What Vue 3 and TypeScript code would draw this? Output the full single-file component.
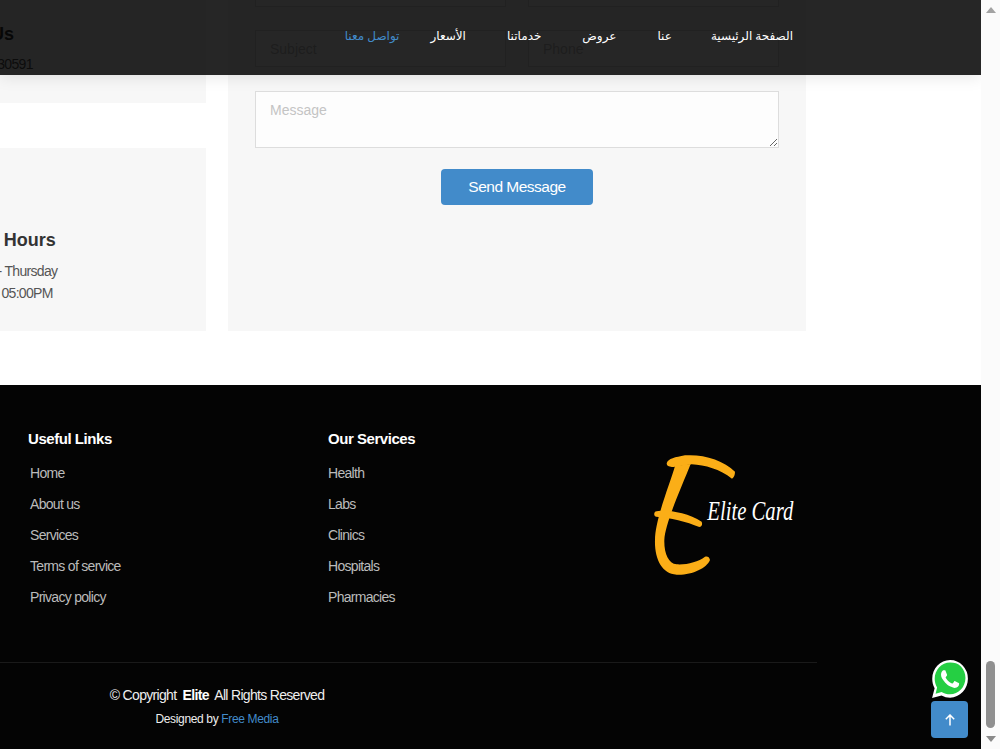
<script setup lang="ts">
const navItems = ['الصفحة الرئيسية', 'عنا', 'عروض', 'خدماتنا', 'الأسعار'];
const usefulLinks = ['Home', 'About us', 'Services', 'Terms of service', 'Privacy policy'];
const serviceLinks = ['Health', 'Labs', 'Clinics', 'Hospitals', 'Pharmacies'];
</script>

<template>
  <div class="page">
    <div class="viewport">
      <header class="topbar">
        <nav class="nav">
          <a v-for="item in navItems" :key="item" class="nav-link">{{ item }}</a>
          <a class="nav-link active">تواصل معنا</a>
        </nav>
      </header>

      <section class="contact">
        <div class="info-col">
          <div class="info-card call">
            <h3>Call Us</h3>
            <p>+1 5589 30591</p>
          </div>
          <div class="info-card hours">
            <h3>Working Hours</h3>
            <p>Saturday - Thursday</p>
            <p>09:00AM - 05:00PM</p>
          </div>
        </div>

        <form class="contact-form" @submit.prevent>
          <div class="form-row">
            <input type="text" placeholder="Your Name" />
            <input type="text" placeholder="Your Email" />
          </div>
          <div class="form-row">
            <input type="text" placeholder="Subject" />
            <input type="text" placeholder="Phone" />
          </div>
          <textarea placeholder="Message"></textarea>
          <button type="submit" class="send-btn">Send Message</button>
        </form>
      </section>

      <footer class="footer">
        <div class="footer-top">
          <div class="footer-col">
            <h4>Useful Links</h4>
            <ul class="indented">
              <li v-for="link in usefulLinks" :key="link">{{ link }}</li>
            </ul>
          </div>
          <div class="footer-col">
            <h4>Our Services</h4>
            <ul>
              <li v-for="link in serviceLinks" :key="link">{{ link }}</li>
            </ul>
          </div>
          <svg class="logo" width="150" height="130" viewBox="90 60 450 390">
            <g fill="#fbae17">
              <path d="M140 100C145 85 165 82 195 76C250 72 310 90 345 125C345 135 342 142 336 146C300 118 255 105 215 103L165 110C150 112 140 110 140 100Z" />
              <path d="M165 108C150 160 105 270 105 330C103 385 125 432 170 434C215 436 260 415 270 390C268 380 262 378 255 380C235 395 200 405 170 403C145 400 132 370 133 330C135 280 185 170 212 102Z" />
              <path d="M105 245C130 238 200 245 245 275C248 282 246 290 238 291C200 275 150 262 108 260C102 258 101 250 105 245Z" />
            </g>
            <text x="262" y="270" class="logo-text" textLength="258" lengthAdjust="spacingAndGlyphs">Elite Card</text>
          </svg>
        </div>

        <div class="footer-bottom">
          <p class="copyright">© Copyright <strong>Elite</strong> All Rights Reserved</p>
          <p class="credits">Designed by <a>Free Media</a></p>
        </div>
      </footer>

      <a class="whatsapp">
        <svg width="36" height="38" viewBox="0 0 24 24" preserveAspectRatio="none">
          <path fill="#fff" d="M12.05 0C5.495 0 .16 5.335.157 11.892c0 2.096.547 4.142 1.588 5.945L.057 24l6.305-1.654a11.882 11.882 0 005.683 1.448h.005c6.554 0 11.89-5.335 11.893-11.893a11.821 11.821 0 00-3.48-8.413A11.821 11.821 0 0012.05 0z" />
          <path fill="#25cf43" d="M12.05 1.6C6.4 1.6 1.8 6.2 1.8 11.9c0 2 .55 3.8 1.6 5.5l-1 3.9 4-1.05c1.7.95 3.6 1.45 5.6 1.45 5.65 0 10.3-4.6 10.3-10.3 0-2.75-1.05-5.35-3-7.3-1.95-1.9-4.5-2.5-7.25-2.5z" />
          <path fill="#fff" d="M17.472 14.382c-.297-.149-1.758-.867-2.03-.967-.273-.099-.471-.148-.67.15-.197.297-.767.966-.94 1.164-.173.199-.347.223-.644.075-.297-.15-1.255-.463-2.39-1.475-.883-.788-1.48-1.761-1.653-2.059-.173-.297-.018-.458.13-.606.134-.133.298-.347.446-.52.149-.174.198-.298.298-.497.099-.198.05-.371-.025-.52-.075-.149-.669-1.612-.916-2.207-.242-.579-.487-.5-.669-.51-.173-.008-.371-.01-.57-.01-.198 0-.52.074-.792.372-.272.297-1.04 1.016-1.04 2.479 0 1.462 1.065 2.875 1.213 3.074.149.198 2.096 3.2 5.077 4.487.709.306 1.262.489 1.694.625.712.227 1.36.195 1.871.118.571-.085 1.758-.719 2.006-1.413.248-.694.248-1.289.173-1.413-.074-.124-.272-.198-.57-.347z" />
        </svg>
      </a>
      <a class="back-top">
        <svg width="12" height="12" viewBox="0 0 12 12" fill="none" stroke="#fff" stroke-width="1.5">
          <path d="M6 11.5V1M1.8 5.2L6 1l4.2 4.2" />
        </svg>
      </a>
    </div>

    <div class="scrollbar">
      <span class="arrow up"></span>
      <div class="track"><div class="thumb"></div></div>
      <span class="arrow down"></span>
    </div>
  </div>
</template>

<style>
html,
body {
  margin: 0;
  overflow: hidden;
  background: #fff;
}
</style>

<style scoped>
.page {
  display: flex;
  width: 1000px;
  height: 749px;
  overflow: hidden;
  font-family: "Liberation Sans", Arial, sans-serif;
}

.viewport {
  position: relative;
  width: 981px;
  height: 749px;
  overflow: hidden;
  background: #fff;
}

.topbar {
  position: absolute;
  top: 0;
  left: 0;
  right: 0;
  z-index: 5;
  height: 75px;
  background: rgba(0, 0, 0, 0.85);
  box-shadow: 0 2px 15px rgba(0, 0, 0, 0.1);
}

.nav {
  direction: rtl;
  display: flex;
  gap: 41px;
  height: 71px;
  align-items: center;
  padding-right: 188px;
  font-family: "Noto Sans", "DejaVu Sans", sans-serif;
  font-size: 12px;
}

.nav-link {
  color: #fff;
}

.nav-link:first-child {
  margin-left: -2px;
}

.nav-link.active {
  color: #428bca;
  margin-right: -10px;
}

.contact {
  display: flex;
  gap: 22px;
  margin-top: -100px;
  padding-bottom: 54px;
}

.info-col {
  flex: none;
  display: flex;
  flex-direction: column;
  gap: 45px;
  width: 406px;
  margin-left: -200px;
}

.info-card {
  display: flex;
  flex-direction: column;
  justify-content: flex-end;
  box-sizing: border-box;
  background: #f7f7f7;
}

.info-card h3 {
  margin: 0 0 8px;
  font-size: 18px;
  line-height: 24px;
  color: #333;
}

.info-card p {
  margin: 0;
  font-size: 14px;
  line-height: 22px;
  color: #555;
  letter-spacing: -0.7px;
}

.info-card.call {
  height: 203px;
  padding: 0 0 28px 153px;
}

.info-card.call h3 {
  margin-bottom: 7px;
}

.info-card.call p {
  margin-left: -5px;
}

.info-card.hours {
  height: 183px;
  padding: 0 0 27px 127px;
}

.info-card.hours p {
  margin-left: 13px;
}

.info-card.hours h3 + p {
  margin-left: 17px;
}

.contact-form {
  box-sizing: border-box;
  width: 578px;
  height: 431px;
  padding: 70px 27px 0;
  background: #f7f7f7;
  display: flex;
  flex-direction: column;
  align-items: center;
}

.form-row {
  display: flex;
  gap: 22px;
  width: 100%;
  margin-bottom: 23px;
}

.form-row input,
textarea {
  box-sizing: border-box;
  border: 1px solid #ddd;
  border-radius: 0;
  background: #fff;
  padding: 0 14px;
  font-family: inherit;
  font-size: 14px;
  outline: none;
}

.form-row input {
  flex: 1;
  min-width: 0;
  height: 37px;
}

textarea {
  display: block;
  width: 100%;
  height: 57px;
  padding-top: 10px;
  margin-top: 1px;
  background: #fdfdfd;
}

input::placeholder,
textarea::placeholder {
  color: #c4c4c4;
}

.send-btn {
  width: 152px;
  height: 36px;
  margin-top: 21px;
  border: none;
  border-radius: 4px;
  background: #428bca;
  color: #fff;
  font-family: inherit;
  font-size: 15.5px;
  letter-spacing: -0.5px;
  cursor: pointer;
}

.footer {
  height: 364px;
  background: #040404;
  display: flex;
  flex-direction: column;
}

.footer-top {
  display: flex;
  height: 277px;
  box-sizing: border-box;
  padding: 45px 0 0 28px;
}

.footer-col {
  width: 300px;
  flex: none;
}

.footer-col h4 {
  margin: 0 0 10px;
  font-size: 15px;
  line-height: 18px;
  color: #fff;
  letter-spacing: -0.45px;
}

.footer-col ul {
  margin: 0;
  padding: 0;
  list-style: none;
}

.footer-col ul.indented {
  padding-left: 2px;
}

.footer-col li {
  font-size: 14px;
  line-height: 31px;
  letter-spacing: -0.7px;
  color: #bbb;
}

.logo {
  flex: none;
  margin: 20px 0 0 22px;
}

.logo-text {
  font-family: "Liberation Serif", serif;
  font-style: italic;
  font-size: 84px;
  fill: #fff;
}

.footer-bottom {
  width: 817px;
  box-sizing: border-box;
  border-top: 1px solid #1a1a1a;
  padding: 23px 383px 0 0;
  text-align: center;
  color: #eee;
}

.copyright {
  margin: 0;
  font-size: 14px;
  line-height: 18px;
  letter-spacing: -0.68px;
}

.copyright strong {
  color: #fff;
  margin: 0 3px;
}

.credits {
  margin: 7px 0 0;
  font-size: 12px;
  line-height: 16px;
  letter-spacing: -0.35px;
}

.credits a {
  color: #428bca;
}

.whatsapp {
  position: absolute;
  left: 932px;
  top: 660px;
  line-height: 0;
}

.back-top {
  position: absolute;
  left: 931px;
  top: 701px;
  width: 37px;
  height: 37px;
  border-radius: 4px;
  background: #428bca;
  display: flex;
  align-items: center;
  justify-content: center;
}

.scrollbar {
  flex: none;
  width: 19px;
  background: #fbfbfb;
  display: flex;
  flex-direction: column;
  align-items: center;
}

.arrow {
  flex: none;
  width: 0;
  height: 0;
  border-left: 5px solid transparent;
  border-right: 5px solid transparent;
}

.arrow.up {
  margin-top: 7px;
  border-bottom: 6px solid #a3a3a3;
}

.arrow.down {
  margin-bottom: 7px;
  border-top: 6px solid #8a8a8a;
}

.track {
  flex: 1;
  width: 100%;
  display: flex;
  flex-direction: column;
  justify-content: flex-end;
  align-items: center;
  padding-bottom: 8px;
}

.thumb {
  width: 9px;
  height: 67px;
  border-radius: 5px;
  background: #8f8f8f;
}
</style>
